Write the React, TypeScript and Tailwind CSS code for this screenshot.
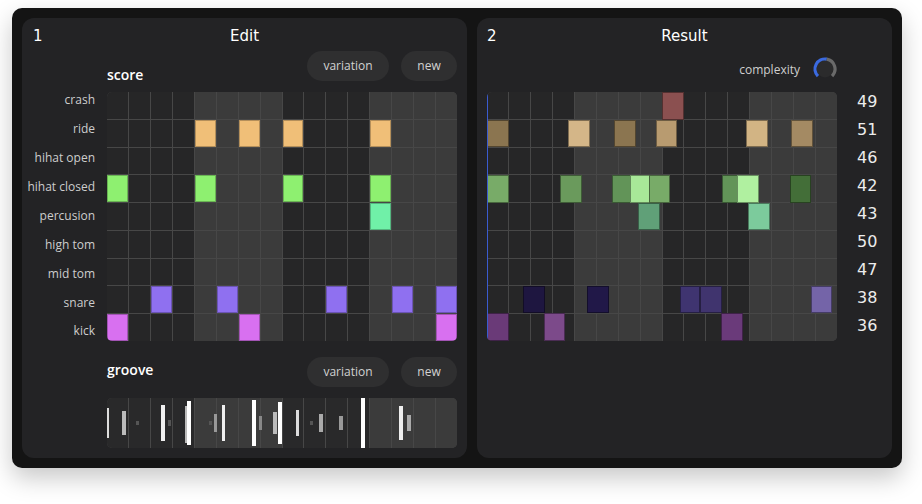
import React from 'react';

// drum rows, top to bottom
const LABELS = ['crash', 'ride', 'hihat open', 'hihat closed', 'percusion', 'high tom', 'mid tom', 'snare', 'kick'];
const MIDI = [49, 51, 46, 42, 43, 50, 47, 38, 36];

// edit score: row -> active steps + colour
const SCORE: { row: number; steps: number[]; color: string }[] = [
  { row: 1, steps: [4, 6, 8, 12], color: 'bg-[#f0bf78]' },
  { row: 3, steps: [0, 4, 8, 12], color: 'bg-[#8ef070]' },
  { row: 4, steps: [12], color: 'bg-[#70f0a8]' },
  { row: 7, steps: [2, 5, 10, 13, 15], color: 'bg-[#8f70f0]' },
  { row: 8, steps: [0, 6, 15], color: 'bg-[#d870f0]' },
];

// result notes are off-grid (micro timing), x in px from grid left
const RESULT: { row: number; x: number; w?: number; color: string }[] = [
  { row: 0, x: 175, color: '#8b5050' },
  { row: 1, x: 0, color: '#8b7550' },
  { row: 1, x: 81, color: '#d4b688' },
  { row: 1, x: 127.3, color: '#8b7550' },
  { row: 1, x: 168.7, color: '#b89b70' },
  { row: 1, x: 259.3, color: '#d2b484' },
  { row: 1, x: 304, color: '#a48a63' },
  { row: 3, x: 0, color: '#78ab68' },
  { row: 3, x: 73.3, color: '#6a9a5c' },
  { row: 3, x: 125.3, color: '#629458' },
  { row: 3, x: 143.3, color: '#a8e898' },
  { row: 3, x: 161.7, color: '#78ab68' },
  { row: 3, x: 235, color: '#629458' },
  { row: 3, x: 250.3, color: '#b0f0a0' },
  { row: 3, x: 302.7, color: '#436e38' },
  { row: 4, x: 151.3, color: '#60a078' },
  { row: 4, x: 261.3, color: '#7ccb9c' },
  { row: 7, x: 36.3, color: '#1e1640' },
  { row: 7, x: 100.3, color: '#211848' },
  { row: 7, x: 193.3, w: 20, color: '#3f3470' },
  { row: 7, x: 213.3, color: '#40346e' },
  { row: 7, x: 323.7, color: '#7464a8' },
  { row: 8, x: 0, color: '#6a3a78' },
  { row: 8, x: 57, w: 20.7, color: '#7c4a8a' },
  { row: 8, x: 234.3, color: '#6a3a7a' },
];

// groove bars: x / top / height in px inside the strip
const GROOVE: { x: number; w: number; t: number; h: number; c: string }[] = [
  { x: 0, w: 2, t: 10, h: 30, c: '#dddddd' },
  { x: 15.3, w: 3.4, t: 13, h: 24, c: '#bbbbbb' },
  { x: 28.7, w: 3, t: 23, h: 4, c: '#555555' },
  { x: 54.3, w: 3.7, t: 7, h: 36, c: '#f0f0f0' },
  { x: 61.3, w: 3, t: 22, h: 6, c: '#555555' },
  { x: 78.3, w: 2, t: 8, h: 37, c: '#bbbbbb' },
  { x: 80, w: 4, t: 3, h: 44, c: '#ffffff' },
  { x: 102, w: 3, t: 23, h: 4, c: '#555555' },
  { x: 106.7, w: 3.3, t: 16, h: 18, c: '#999999' },
  { x: 114.7, w: 3.3, t: 7, h: 36, c: '#f0f0f0' },
  { x: 145, w: 3.7, t: 2, h: 46, c: '#ffffff' },
  { x: 151.7, w: 3.3, t: 18, h: 14, c: '#888888' },
  { x: 166.3, w: 3.7, t: 14, h: 22, c: '#bbbbbb' },
  { x: 170.7, w: 4, t: 4, h: 42, c: '#ffffff' },
  { x: 188.7, w: 3.3, t: 12, h: 26, c: '#dddddd' },
  { x: 203, w: 3, t: 23, h: 4, c: '#555555' },
  { x: 212, w: 3.7, t: 16, h: 18, c: '#aaaaaa' },
  { x: 232, w: 3.7, t: 18, h: 14, c: '#999999' },
  { x: 254, w: 4, t: 0, h: 50, c: '#ffffff' },
  { x: 292, w: 3.7, t: 8, h: 34, c: '#eeeeee' },
  { x: 300, w: 3.7, t: 17, h: 16, c: '#aaaaaa' },
];

const ROW_H = 249 / 9;
const isLight = (c: number) => Math.floor(c / 4) % 2 === 1;

// plain 16 x rows background with shaded bars
const GridBg: React.FC<{ rows: number; dark: string }> = ({ rows, dark }) => (
  <div className={`grid grid-cols-16 gap-px bg-[#474747] h-full ${rows === 9 ? 'grid-rows-9' : 'grid-rows-1'}`}>
    {Array.from({ length: rows * 16 }).map((_, i) => (
      <div key={i} className={isLight(i % 16) ? 'bg-[#3b3b3b]' : dark} />
    ))}
  </div>
);

const Pill: React.FC<{ children: React.ReactNode; w: string }> = ({ children, w }) => (
  <div className={`${w} h-[30px] rounded-full bg-[#2f2f30] flex items-center justify-center text-[12px] text-[#d2d2d2]`}>
    {children}
  </div>
);

const Knob: React.FC = () => (
  <svg width="26" height="26" viewBox="0 0 26 26">
    <circle cx="13" cy="13" r="8.5" fill="#2b2b2c" />
    <path d="M5.93 20.07 A10 10 0 0 1 14.74 3.15" fill="none" stroke="#3b6ae0" strokeWidth="3.2" />
    <path d="M14.74 3.15 A10 10 0 0 1 20.07 20.07" fill="none" stroke="#6a6a6a" strokeWidth="3.2" />
  </svg>
);

const pixelFont = { fontFamily: '"DejaVu Sans", sans-serif' };

export default function App() {
  return (
    <div className="w-[922px] h-[504px] bg-white pt-[8px] pl-[12px]" style={{ fontFamily: '"Open Sans", sans-serif' }}>
      <div className="w-[890px] h-[460px] bg-[#141414] rounded-[10px] p-[10px] flex gap-[10px] shadow-[0_10px_24px_rgba(0,0,0,0.22)]">
        {/* Edit panel */}
        <div className="w-[445px] h-full bg-[#232325] rounded-[12px] flex flex-col">
          <div className="h-[33px] pt-[4px] relative flex items-center justify-center text-white text-[15px]" style={pixelFont}>
            <span className="absolute left-[11px]">1</span>
            <span>Edit</span>
          </div>
          <div className="grid grid-cols-[73px_350px] gap-x-[12px]">
            <div />
            <div className="h-[41px] flex items-start justify-between">
              <span className="mt-[13px] text-[14px] font-semibold text-white">score</span>
              <div className="flex gap-[12px]">
                <Pill w="w-[82px]">variation</Pill>
                <Pill w="w-[56px]">new</Pill>
              </div>
            </div>
            <div className="flex flex-col -mt-[6px] h-[249px]">
              {LABELS.map((l) => (
                <div key={l} className="h-[28.875px] shrink-0 flex items-center justify-end text-[12px] text-[#cdcdcd]">
                  {l}
                </div>
              ))}
            </div>
            <div className="relative w-[350px] h-[249px] rounded-[5px] overflow-hidden">
              <GridBg rows={9} dark="bg-[#262627]" />
              {/* active steps */}
              <div className="absolute inset-0 grid grid-cols-16 grid-rows-9 gap-px">
                {SCORE.flatMap((s) =>
                  s.steps.map((c) => (
                    <div
                      key={`${s.row}-${c}`}
                      className={`${s.color} border border-black/25`}
                      style={{ gridColumn: c + 1, gridRow: s.row + 1 }}
                    />
                  ))
                )}
              </div>
            </div>
            <div />
            <div className="h-[57px] flex items-start justify-between">
              <span className="mt-[18px] text-[14px] font-semibold text-white">groove</span>
              <div className="flex gap-[12px] mt-[16px]">
                <Pill w="w-[82px]">variation</Pill>
                <Pill w="w-[56px]">new</Pill>
              </div>
            </div>
            <div />
            <div className="relative w-[350px] h-[50px] rounded-[5px] overflow-hidden">
              <GridBg rows={1} dark="bg-[#29292a]" />
              {GROOVE.map((b, i) => (
                <div
                  key={i}
                  className="absolute"
                  style={{ left: b.x, width: b.w, top: b.t, height: b.h, background: b.c }}
                />
              ))}
            </div>
          </div>
        </div>

        {/* Result panel */}
        <div className="flex-1 h-full bg-[#232325] rounded-[12px] flex flex-col pl-[10px]">
          <div className="h-[33px] pt-[4px] relative flex items-center justify-center text-white text-[15px] -ml-[10px]" style={pixelFont}>
            <span className="absolute left-[10px]">2</span>
            <span>Result</span>
          </div>
          <div className="w-[350px] h-[41px] flex items-start justify-end gap-[12px]">
            <span className="mt-[10px] text-[12px] text-[#cfcfcf]">complexity</span>
            <div className="mt-[5px] -mr-[1px]">
              <Knob />
            </div>
          </div>
          <div className="flex gap-[20px]">
            <div className="relative w-[350px] h-[249px] rounded-[5px] overflow-hidden">
              <GridBg rows={9} dark="bg-[#262627]" />
              {RESULT.map((n, i) => (
                <div
                  key={i}
                  className="absolute border border-black/40"
                  style={{
                    left: n.x,
                    width: n.w ?? 21.6,
                    top: n.row * ROW_H,
                    height: ROW_H,
                    background: n.color,
                  }}
                />
              ))}
              {/* playhead */}
              <div className="absolute left-0 top-0 w-px h-full bg-[#3a5bd0]" />
            </div>
            <div className="flex flex-col -mt-[4px] text-[16px] text-[#ececec]" style={pixelFont}>
              {MIDI.map((m) => (
                <div key={m} className="h-[28px] flex items-center">
                  {m}
                </div>
              ))}
            </div>
          </div>
        </div>
      </div>
    </div>
  );
}
